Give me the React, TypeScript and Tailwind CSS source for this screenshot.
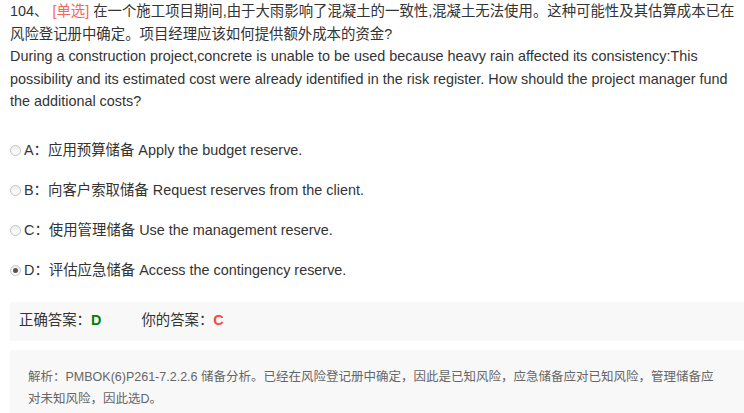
const font = "font-['Liberation_Sans','Noto_Sans_CJK_SC',sans-serif]";

const options = [
  { key: "A", text: "应用预算储备 Apply the budget reserve." },
  { key: "B", text: "向客户索取储备 Request reserves from the client." },
  { key: "C", text: "使用管理储备 Use the management reserve." },
  { key: "D", text: "评估应急储备 Access the contingency reserve.", checked: true },
];

function Radio({ checked }: { checked?: boolean }) {
  return (
    <span className="mr-[3px] flex h-[11px] w-[11px] shrink-0 items-center justify-center rounded-full border border-[#c4c4c4] bg-gradient-to-b from-[#eee] to-white">
      {checked && <span className="h-[5px] w-[5px] rounded-full bg-[#555]" />}
    </span>
  );
}

export default function App() {
  return (
    <div className={`${font} h-[413px] w-[744px] overflow-hidden bg-white text-[14.4px] text-[#333]`}>
      <div className="pl-[10px] pr-[6px] leading-[22.5px]">
        <p>
          104、 <span className="text-[#f4665a]">[单选]</span> 在一个施工项目期间,由于大雨影响了混凝土的一致性,混凝土无法使用。这种可能性及其估算成本已在风险登记册中确定。项目经理应该如何提供额外成本的资金?
        </p>
        <p>
          During a construction project,concrete is unable to be used because heavy rain affected its consistency:This possibility and its estimated cost were already identified in the risk register. How should the project manager fund the additional costs?
        </p>
      </div>

      <div className="mt-[27px] flex flex-col gap-[18px] pl-[10px]">
        {options.map((o) => (
          <label key={o.key} className="flex h-[22px] items-center">
            <Radio checked={o.checked} />
            <span>
              {o.key}：{o.text}
            </span>
          </label>
        ))}
      </div>

      <div className="ml-[10px] mt-[20px] flex h-[39px] items-center bg-[#f8f8f8] pl-[9px]">
        <span>正确答案：</span>
        <span className="font-bold text-[#008000]">D</span>
        <span className="ml-[40px]">你的答案：</span>
        <span className="font-bold text-[#f44]">C</span>
      </div>

      <div className="ml-[10px] mt-[9px] bg-[#f8f8f8] pb-[16px] pl-[18px] pr-[26px] pt-[16px] text-[12.5px] leading-[22px] text-[#666]">
        解析：PMBOK(6)P261-7.2.2.6 储备分析。已经在风险登记册中确定，因此是已知风险，应急储备应对已知风险，管理储备应对未知风险，因此选D。
      </div>
    </div>
  );
}
